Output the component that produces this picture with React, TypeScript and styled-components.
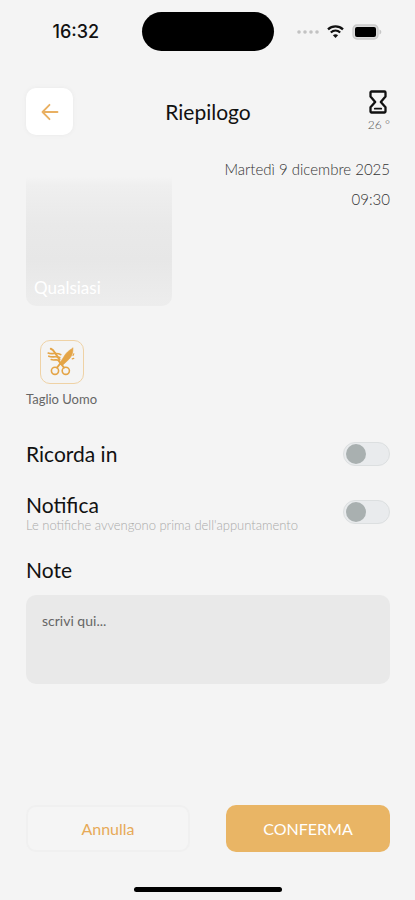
import React from "react";
import styled, { createGlobalStyle } from "styled-components";

const GlobalStyle = createGlobalStyle`
  *, *::before, *::after { box-sizing: border-box; }
  body { margin: 0; background: #f4f4f4; }
  body, button, textarea { font-family: Lato, "Liberation Sans", sans-serif; }
  h1, h2, p { margin: 0; font-weight: 400; }
  svg { display: block; }
`;

const Screen = styled.div`
  display: flex;
  flex-direction: column;
  min-height: 100vh;
  color: #111;
`;

const StatusBar = styled.div`
  display: grid;
  grid-template-columns: 1fr 132px 1fr;
  align-items: center;
  height: 39px;
  margin-top: 12px;
`;

const Clock = styled.time`
  padding-left: 10px;
  text-align: center;
  font: 500 18px/24px Inter, sans-serif;
`;

const Island = styled.div`
  height: 39px;
  border-radius: 20px;
  background: #000;
`;

const StatusIcons = styled.div`
  display: flex;
  align-items: center;
  justify-content: flex-end;
  gap: 8px;
  padding-right: 33px;
`;

const Header = styled.header`
  display: grid;
  grid-template-columns: 1fr auto 1fr;
  align-items: center;
  margin: 37px 25px 0 26px;
`;

const BackButton = styled.button`
  display: grid;
  place-items: center;
  width: 47px;
  height: 47px;
  padding: 0;
  border: 0;
  border-radius: 10px;
  background: #fff;
  box-shadow: 0 0 4px #e9e9e9;
`;

const Title = styled.h1`
  font-size: 21px;
  line-height: 28px;
`;

const Weather = styled.div`
  display: flex;
  flex-direction: column;
  align-items: center;
  justify-self: end;
  gap: 3px;
  color: #555;
  font-size: 12px;
  font-weight: 300;
  line-height: 16px;
`;

const Main = styled.main`
  display: flex;
  flex-direction: column;
  flex: 1;
  padding: 24px 25px 0 26px;
`;

const Booking = styled.section`
  display: flex;
  justify-content: space-between;
`;

const StaffCard = styled.div`
  display: flex;
  align-items: flex-end;
  width: 146px;
  height: 147px;
  padding: 8px;
  border-radius: 10px;
  background: linear-gradient(#f4f4f4 12%, #efefef 18%, #e9e9e9 45%, #e7e7e7 68%, #ededed);
  color: #fff;
  font-size: 17px;
  line-height: 20px;
`;

const Schedule = styled.div`
  display: flex;
  flex-direction: column;
  gap: 10px;
  color: #333;
  text-align: right;
  font-size: 15px;
  font-weight: 300;
  line-height: 20px;
`;

const Service = styled.section`
  display: flex;
  flex-direction: column;
  align-items: center;
  align-self: flex-start;
  gap: 7px;
  margin-top: 34px;
  color: #666;
  font-size: 13px;
  line-height: 16px;
`;

const ServiceIcon = styled.div`
  display: grid;
  place-items: center;
  width: 44px;
  height: 44px;
  border: 1px solid #efd2a5;
  border-radius: 10px;
`;

const Settings = styled.section`
  display: flex;
  flex-direction: column;
  gap: 23px;
  margin-top: 33px;
`;

const SettingRow = styled.div`
  display: flex;
  align-items: center;
  justify-content: space-between;
  min-height: 28px;
`;

const Label = styled.label`
  display: block;
  font-size: 21px;
  line-height: 28px;
`;

const Hint = styled.p`
  color: #aaa;
  font-size: 13px;
  font-weight: 300;
  line-height: 13px;
`;

const Switch = styled.input`
  appearance: none;
  display: flex;
  align-items: center;
  width: 47px;
  height: 24px;
  margin: 0;
  padding: 0 2px;
  border: 1px solid #dcdfe0;
  border-radius: 12px;
  background: #e9ebed;

  &::before {
    content: "";
    width: 20px;
    height: 20px;
    border-radius: 50%;
    background: #a9b0b0;
  }

  &:checked {
    justify-content: flex-end;
    background: #e9b565;
  }
`;

const Notes = styled.section`
  display: flex;
  flex-direction: column;
  gap: 11px;
  margin-top: 24px;
`;

const NoteField = styled.textarea`
  display: block;
  width: 100%;
  height: 89px;
  padding: 16px;
  border: 0;
  border-radius: 10px;
  resize: none;
  background: #e9e9e9;
  color: #333;
  font-size: 14px;
  line-height: 20px;

  &::placeholder { color: #666; opacity: 1; }
`;

const Actions = styled.footer`
  display: grid;
  grid-template-columns: 1fr 1fr;
  gap: 36px;
  margin: auto 25px 35px 26px;
`;

const ActionButton = styled.button<{ $primary?: boolean }>`
  height: 47px;
  padding: 0;
  border: ${(p) => (p.$primary ? "0" : "2px solid #f0f0f0")};
  border-radius: 10px;
  background: ${(p) => (p.$primary ? "#e9b565" : "#f5f5f5")};
  color: ${(p) => (p.$primary ? "#fff" : "#e7aa58")};
  font-size: 16px;
`;

const HomeIndicator = styled.div`
  align-self: center;
  width: 148px;
  height: 5px;
  margin-bottom: 8px;
  border-radius: 3px;
  background: #000;
`;

const SignalIcon = () => (
  <svg width="22" height="5" viewBox="0 0 22 5" fill="#c2c2c2" aria-hidden="true">
    <circle cx="2" cy="3" r="1.8" />
    <circle cx="8" cy="3" r="1.8" />
    <circle cx="14" cy="3" r="1.8" />
    <circle cx="20" cy="3" r="1.8" />
  </svg>
);

const WifiIcon = () => (
  <svg width="17" height="13" viewBox="0 0 17 13" fill="none" stroke="#111" strokeWidth="2.3" aria-hidden="true">
    <path d="M1 4.3C5.2.4 11.8.4 16 4.3" />
    <path d="M3.8 7.5c2.8-2.5 6.6-2.5 9.4 0" />
    <path d="M8.5 13 5.9 10.2c1.5-1.3 3.7-1.3 5.2 0Z" fill="#111" stroke="none" />
  </svg>
);

const BatteryIcon = () => (
  <svg width="30" height="16" viewBox="0 0 30 16" aria-hidden="true">
    <rect x="1" y="1" width="25" height="14" rx="4" fill="#dcdcdc" stroke="#cacaca" strokeWidth="1.3" />
    <rect x="3" y="3" width="21" height="10" rx="2" fill="#000" />
    <path d="M27.5 5.5c2.4 1 2.4 4 0 5Z" fill="#c6c6c6" />
  </svg>
);

const BackIcon = () => (
  <svg width="18" height="18" viewBox="0 0 18 18" fill="none" stroke="#e9b062" strokeWidth="1.8" strokeLinecap="round" strokeLinejoin="round" aria-hidden="true">
    <path d="M16.5 9H1.5M8.5 1.8 1.5 9l7 7.2" />
  </svg>
);

const HourglassIcon = () => (
  <svg width="20" height="24" viewBox="0 0 20 24" fill="none" stroke="#111" strokeWidth="2.3" strokeLinecap="round" strokeLinejoin="round" aria-hidden="true">
    <path d="M2.5 1.5h13a1 1 0 0 1 1 1v4L11.8 12l4.7 5.2v4.3a1 1 0 0 1-1 1h-13a1 1 0 0 1-1-1v-4.3L6.2 12 1.5 6.5v-4a1 1 0 0 1 1-1Z" />
    <path d="M5.8 18.7h6.4" strokeWidth="1.8" />
  </svg>
);

const ScissorsIcon = () => (
  <svg width="30" height="30" viewBox="0 0 30 30" fill="none" stroke="#e4a446" strokeWidth="1.6" strokeLinecap="round" strokeLinejoin="round" aria-hidden="true">
    <circle cx="8" cy="23.8" r="3.6" />
    <circle cx="18.8" cy="23.8" r="3.6" />
    <path d="m10 20.6 4-5M17 20.6l-5.5-7" strokeWidth="1.8" />
    <path d="M25.8 1.2c.6 4.5-1.4 9-4.8 12L15.3 18.6l-2.6-2.4 4-6.2c2-3.8 5-6.7 9.1-8.8Z" fill="#e4a446" strokeWidth=".6" />
    <path d="M3.8 1.8c1.6.6 2.8 1.8 3.8 3.4l5 7.5" strokeWidth="2" />
    <path d="M1.2 6c4 1.8 8.8-1 12.6 1.6M1.8 9.2c3.4 1.6 7-.4 11 1.4M4.2 12.6c2.8 1 5-.4 7.4.6" />
    <path d="m26.8 6.8-.8 1.6M26.8 11.4l-1.6.5" strokeWidth="1.2" />
  </svg>
);

export default function App() {
  return (
    <>
      <GlobalStyle />
      <Screen>
        <StatusBar>
          <Clock>16:32</Clock>
          <Island />
          <StatusIcons>
            <SignalIcon />
            <WifiIcon />
            <BatteryIcon />
          </StatusIcons>
        </StatusBar>

        <Header>
          <BackButton type="button" aria-label="Indietro"><BackIcon /></BackButton>
          <Title>Riepilogo</Title>
          <Weather><HourglassIcon /><span>26 °</span></Weather>
        </Header>

        <Main>
          <Booking>
            <StaffCard>Qualsiasi</StaffCard>
            <Schedule>
              <span>Martedì 9 dicembre 2025</span>
              <time>09:30</time>
            </Schedule>
          </Booking>

          <Service>
            <ServiceIcon><ScissorsIcon /></ServiceIcon>
            <span>Taglio Uomo</span>
          </Service>

          <Settings>
            <SettingRow>
              <Label htmlFor="remind">Ricorda in</Label>
              <Switch id="remind" type="checkbox" role="switch" />
            </SettingRow>
            <SettingRow>
              <div>
                <Label htmlFor="notify">Notifica</Label>
                <Hint id="notify-hint">Le notifiche avvengono prima dell'appuntamento</Hint>
              </div>
              <Switch id="notify" type="checkbox" role="switch" aria-describedby="notify-hint" />
            </SettingRow>
          </Settings>

          <Notes>
            <Label htmlFor="notes">Note</Label>
            <NoteField id="notes" placeholder="scrivi qui..." />
          </Notes>
        </Main>

        <Actions>
          <ActionButton type="button">Annulla</ActionButton>
          <ActionButton type="button" $primary>CONFERMA</ActionButton>
        </Actions>
        <HomeIndicator />
      </Screen>
    </>
  );
}
